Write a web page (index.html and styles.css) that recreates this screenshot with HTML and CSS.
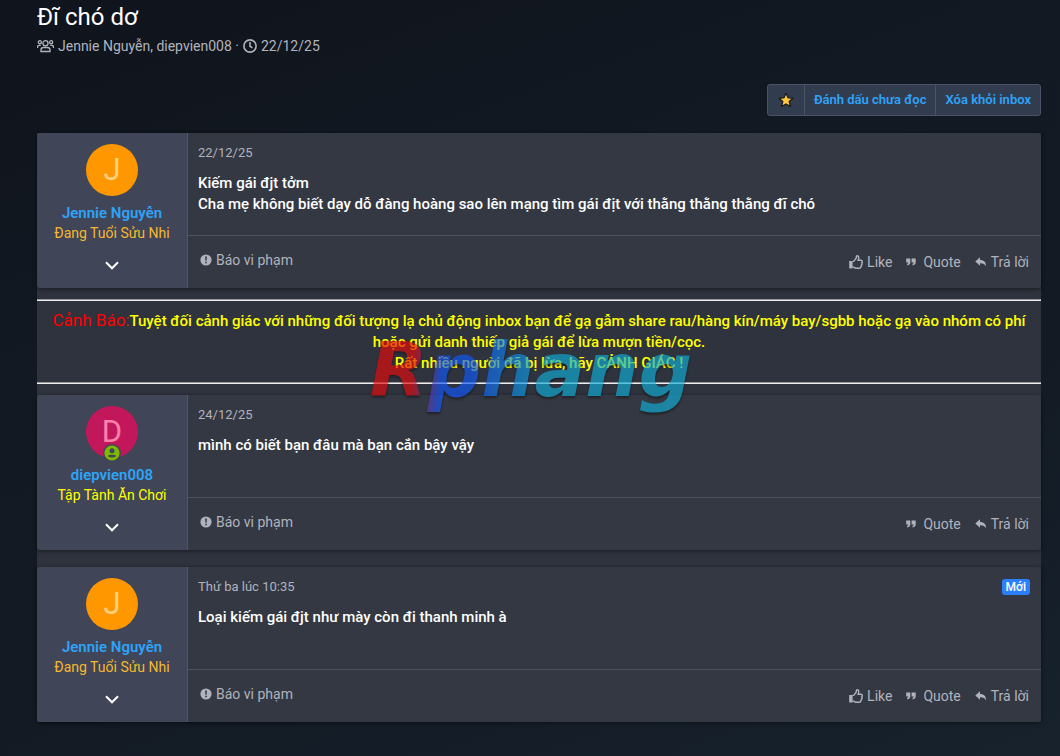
FILE: index.html
```
<!DOCTYPE html>
<html lang="vi">
<head>
<meta charset="utf-8">
<meta name="viewport" content="width=device-width, initial-scale=1">
<title>Đĩ chó dơ</title>
<link rel="stylesheet" href="styles.css">
</head>
<body>
<svg class="sprite" aria-hidden="true">
  <symbol id="users" viewBox="0 0 18 14"><g fill="none" stroke="currentColor" stroke-width="1.4"><circle cx="9" cy="4" r="2.7"/><circle cx="3" cy="3" r="1.6"/><circle cx="15" cy="3" r="1.6"/><path d="M4.2 12.8v-1.6q0-2.6 2.7-2.6h4.2q2.7 0 2.7 2.6v1.6zM.6 9V8Q.6 6.4 2.3 6.4H4M17.4 9V8q0-1.6-1.7-1.6H14"/></g></symbol>
  <symbol id="clock" viewBox="0 0 14 14"><g fill="none" stroke="currentColor" stroke-width="1.6"><circle cx="7" cy="7" r="6.1"/><path d="M7 3v4.2l2.4 1.6"/></g></symbol>
  <symbol id="star" viewBox="0 0 16 16"><path d="M8 1.2l2 4.6 5 .4-3.8 3.3 1.2 5L8 11.9l-4.4 2.6 1.2-5L1 6.2l5-.4z" fill="#ffc83d" stroke="#17191f" stroke-width="1.2" stroke-linejoin="round"/></symbol>
  <symbol id="down" viewBox="0 0 14 9"><path d="M1 1.3l6 6 6-6" fill="none" stroke="currentColor" stroke-width="2"/></symbol>
  <symbol id="alert" viewBox="0 0 12 12"><circle cx="6" cy="6" r="5.6" fill="currentColor"/><path d="M5.1 2.5h1.8l-.3 4.2H5.4zM5.2 7.7h1.6v1.6H5.2z" fill="#343842"/></symbol>
  <symbol id="like" viewBox="0 0 14 14"><path d="M.2 6h3.4v7.4H.2z" fill="currentColor"/><path d="M3.6 6.4h1.1L7.3 3V1.8Q7.4.7 8.2.7q1.7.2 1.6 2.3L9.1 5.3h2.8q1.5.1 1.4 1.6-.1.7-.5 1 .4.5.2 1.2-.1.6-.6 1 .2.6-.1 1.1-.2.4-.6.6.1 1.3-1.4 1.4H7.2q-1.1 0-2.2-.8l-1.4-.5" fill="none" stroke="currentColor" stroke-width="1.4"/></symbol>
  <symbol id="quote" viewBox="0 0 10 8"><path d="M.2.4h4.1v4.1Q4.2 7 1.2 7.4V5.8q1.3-.2 1.3-1.3H.2zM5.6.4h4.1v4.1Q9.6 7 6.6 7.4V5.8q1.3-.2 1.3-1.3H5.6z" fill="currentColor"/></symbol>
  <symbol id="reply" viewBox="0 0 12 10"><path d="M5 .3v2.6c4.1 0 6.3 2.2 5.9 6.6C10 7.2 8.1 6.1 5 6.2v2.6L.3 4.5z" fill="currentColor"/></symbol>
</svg>
<main class="page">
  <header class="heading">
    <h1 class="title">Đĩ chó dơ</h1>
    <div class="meta"><svg class="icon-users"><use href="#users"/></svg><span>Jennie Nguyễn, diepvien008 ·</span><svg class="icon-clock"><use href="#clock"/></svg><time>22/12/25</time></div>
  </header>
  <div class="toolbar">
    <div class="buttons">
      <button class="button button-star" type="button" aria-label="★"><svg class="icon-star"><use href="#star"/></svg></button>
      <button class="button" type="button">Đánh dấu chưa đọc</button>
      <button class="button" type="button">Xóa khỏi inbox</button>
    </div>
  </div>
  <section class="thread">
    <article class="post">
      <aside class="user">
        <div class="avatar avatar-j">J</div>
        <a class="name" href="#">Jennie Nguyễn</a>
        <div class="rank">Đang Tuổi Sửu Nhi</div>
        <svg class="icon-down"><use href="#down"/></svg>
      </aside>
      <div class="main">
        <div class="content">
          <div class="date"><time>22/12/25</time></div>
          <p class="text">Kiếm gái đjt tởm<br>Cha mẹ không biết dạy dỗ đàng hoàng sao lên mạng tìm gái địt với thằng thằng thằng đĩ chó</p>
        </div>
        <footer class="actions">
          <a class="action report" href="#"><svg class="icon-alert"><use href="#alert"/></svg>Báo vi phạm</a>
          <div class="replies">
            <a class="action" href="#"><svg class="icon-like"><use href="#like"/></svg>Like</a>
            <a class="action quote" href="#"><svg class="icon-quote"><use href="#quote"/></svg>Quote</a>
            <a class="action" href="#"><svg class="icon-reply"><use href="#reply"/></svg>Trả lời</a>
          </div>
        </footer>
      </div>
    </article>
    <div class="notice">
      <p class="warning"><span class="warning-label">Cảnh Báo:</span>Tuyệt đối cảnh giác với những đối tượng lạ chủ động inbox bạn để gạ gẫm share rau/hàng kín/máy bay/sgbb hoặc gạ vào nhóm có phí hoặc gửi danh thiếp giả gái để lừa mượn tiền/cọc.<br>Rất nhiều người đã bị lừa, hãy CẢNH GIÁC !</p>
      <div class="watermark">Rphang</div>
    </div>
    <article class="post">
      <aside class="user">
        <div class="avatar avatar-d">D<svg class="online" viewBox="0 0 18 18"><circle cx="9" cy="9" r="8.3" fill="#7fb900" stroke="#404657" stroke-width="1.4"/><circle cx="9" cy="6.8" r="2.5" fill="#404657"/><path d="M4.7 12q1.8-1.7 4.3-1.2 2.5-.5 4.3 1.2-1.8 1.5-4.3 1.5T4.7 12z" fill="#404657"/></svg></div>
        <a class="name" href="#">diepvien008</a>
        <div class="rank rank-new">Tập Tành Ăn Chơi</div>
        <svg class="icon-down"><use href="#down"/></svg>
      </aside>
      <div class="main">
        <div class="content">
          <div class="date"><time>24/12/25</time></div>
          <p class="text">mình có biết bạn đâu mà bạn cắn bậy vậy</p>
        </div>
        <footer class="actions">
          <a class="action report" href="#"><svg class="icon-alert"><use href="#alert"/></svg>Báo vi phạm</a>
          <div class="replies">
            <a class="action quote" href="#"><svg class="icon-quote"><use href="#quote"/></svg>Quote</a>
            <a class="action" href="#"><svg class="icon-reply"><use href="#reply"/></svg>Trả lời</a>
          </div>
        </footer>
      </div>
    </article>
    <article class="post post-next">
      <aside class="user">
        <div class="avatar avatar-j">J</div>
        <a class="name" href="#">Jennie Nguyễn</a>
        <div class="rank">Đang Tuổi Sửu Nhi</div>
        <svg class="icon-down"><use href="#down"/></svg>
      </aside>
      <div class="main">
        <div class="content">
          <div class="date"><time>Thứ ba lúc 10:35</time><span class="badge">Mới</span></div>
          <p class="text">Loại kiếm gái đjt như mày còn đi thanh minh à</p>
        </div>
        <footer class="actions">
          <a class="action report" href="#"><svg class="icon-alert"><use href="#alert"/></svg>Báo vi phạm</a>
          <div class="replies">
            <a class="action" href="#"><svg class="icon-like"><use href="#like"/></svg>Like</a>
            <a class="action quote" href="#"><svg class="icon-quote"><use href="#quote"/></svg>Quote</a>
            <a class="action" href="#"><svg class="icon-reply"><use href="#reply"/></svg>Trả lời</a>
          </div>
        </footer>
      </div>
    </article>
  </section>
</main>
</body>
</html>
```
FILE: styles.css
```
* { box-sizing: border-box; }
html { min-height: 100%; background: linear-gradient(160deg, #10141c 0%, #121922 35%, #131a24 65%, #17222d 100%); }
body { margin: 0; color: #fff; font: 15px/21px Roboto, "Noto Sans", sans-serif; }
a { text-decoration: none; }
svg { flex: none; }
.sprite { display: none; }
.page { padding: 2px 19px 34px 37px; }
.title { margin: 0; font-size: 24px; line-height: 30px; font-weight: 400; }
.meta { display: flex; align-items: center; gap: 4px; margin-top: 4px; font-size: 14px; line-height: 20px; color: #b0b3bd; }
.icon-users { width: 17px; height: 14px; }
.icon-clock { width: 14px; height: 14px; }
.toolbar { display: flex; justify-content: flex-end; margin: 28px 0 17px; }
.buttons { display: flex; height: 32px; border: 1px solid #4a5466; border-radius: 3px; background: #323c4f; }
.button { padding: 0 9px; border: 0; border-left: 1px solid #4a5466; background: none; color: #2ea3f8; font: 600 13px/18px Roboto, "Noto Sans", sans-serif; }
.button-star { display: flex; align-items: center; justify-content: center; width: 36px; border-left: 0; }
.icon-star { width: 16px; height: 16px; }
.thread { background: #2f333d; }
.post { display: grid; grid-template-columns: 151px 1fr; min-height: 155px; border-radius: 3px; background: #343842; box-shadow: 0 1px 4px rgba(0, 0, 0, .5); overflow: hidden; }
.post-next { margin-top: 17px; }
.user { display: flex; flex-direction: column; align-items: center; padding-top: 11px; border-right: 1px solid #535763; background: #404657; }
.avatar { position: relative; width: 52px; height: 52px; border-radius: 50%; font-size: 31px; line-height: 52px; text-align: center; }
.avatar-j { background: #ff9800; color: #ffd180; }
.avatar-d { background: #c2185b; color: #ff80ab; }
.online { position: absolute; left: 17px; bottom: -4px; width: 18px; height: 18px; }
.name { margin-top: 7px; color: #2ea3f8; font-size: 15px; line-height: 20px; font-weight: 600; }
.rank { color: #f5b82e; font-size: 14px; line-height: 20px; }
.rank-new { color: #ff0; }
.icon-down { width: 14px; height: 9px; margin-top: 18px; }
.main { display: flex; flex-direction: column; min-width: 0; }
.content { flex: 1; padding: 10px 11px 0 10px; }
.date { display: flex; justify-content: space-between; align-items: center; height: 20px; color: #b0b3bd; font-size: 13px; line-height: 20px; }
.badge { padding: 0 4px; border-radius: 3px; background: #2c7fff; color: #fff; font-size: 12px; line-height: 16px; font-weight: 500; }
.text { margin: 10px 0 0; font-weight: 500; }
.actions { display: flex; justify-content: space-between; height: 53px; padding: 14px 12px 0; border-top: 1px solid #4e525c; }
.action { display: flex; align-items: center; gap: 4px; height: 20px; color: #b0b3bd; font-size: 14px; line-height: 20px; }
.replies { display: flex; gap: 14px; padding-top: 2px; }
.icon-alert { width: 12px; height: 12px; }
.icon-like { width: 14px; height: 14px; }
.icon-quote { width: 10px; height: 8px; }
.icon-reply { width: 12px; height: 10px; }
.quote { gap: 7px; }
.notice { position: relative; margin: 11px 0; border-top: 1px solid #9a9a9e; border-bottom: 1px solid #eee; padding: 10px 10px 9px; box-shadow: inset 0 1px #eee, inset 0 -1px #9a9a9e; }
.warning { margin: 0; color: #ff0; font-weight: 500; text-align: center; }
.warning-label { color: #f00; font-size: 17px; font-weight: 400; }
.watermark { position: absolute; top: 26px; left: 0; right: 16px; width: fit-content; margin: 0 auto; font: italic 700 75px/88px "DejaVu Sans", sans-serif; color: transparent; background: linear-gradient(95deg, #e80a0c 0 14%, #1058ff 23% 32%, #0fafd8 54% 100%); background-clip: text; -webkit-background-clip: text; opacity: .65; pointer-events: none; filter: drop-shadow(0 2px 1px rgba(0, 0, 0, .6)); }
```
